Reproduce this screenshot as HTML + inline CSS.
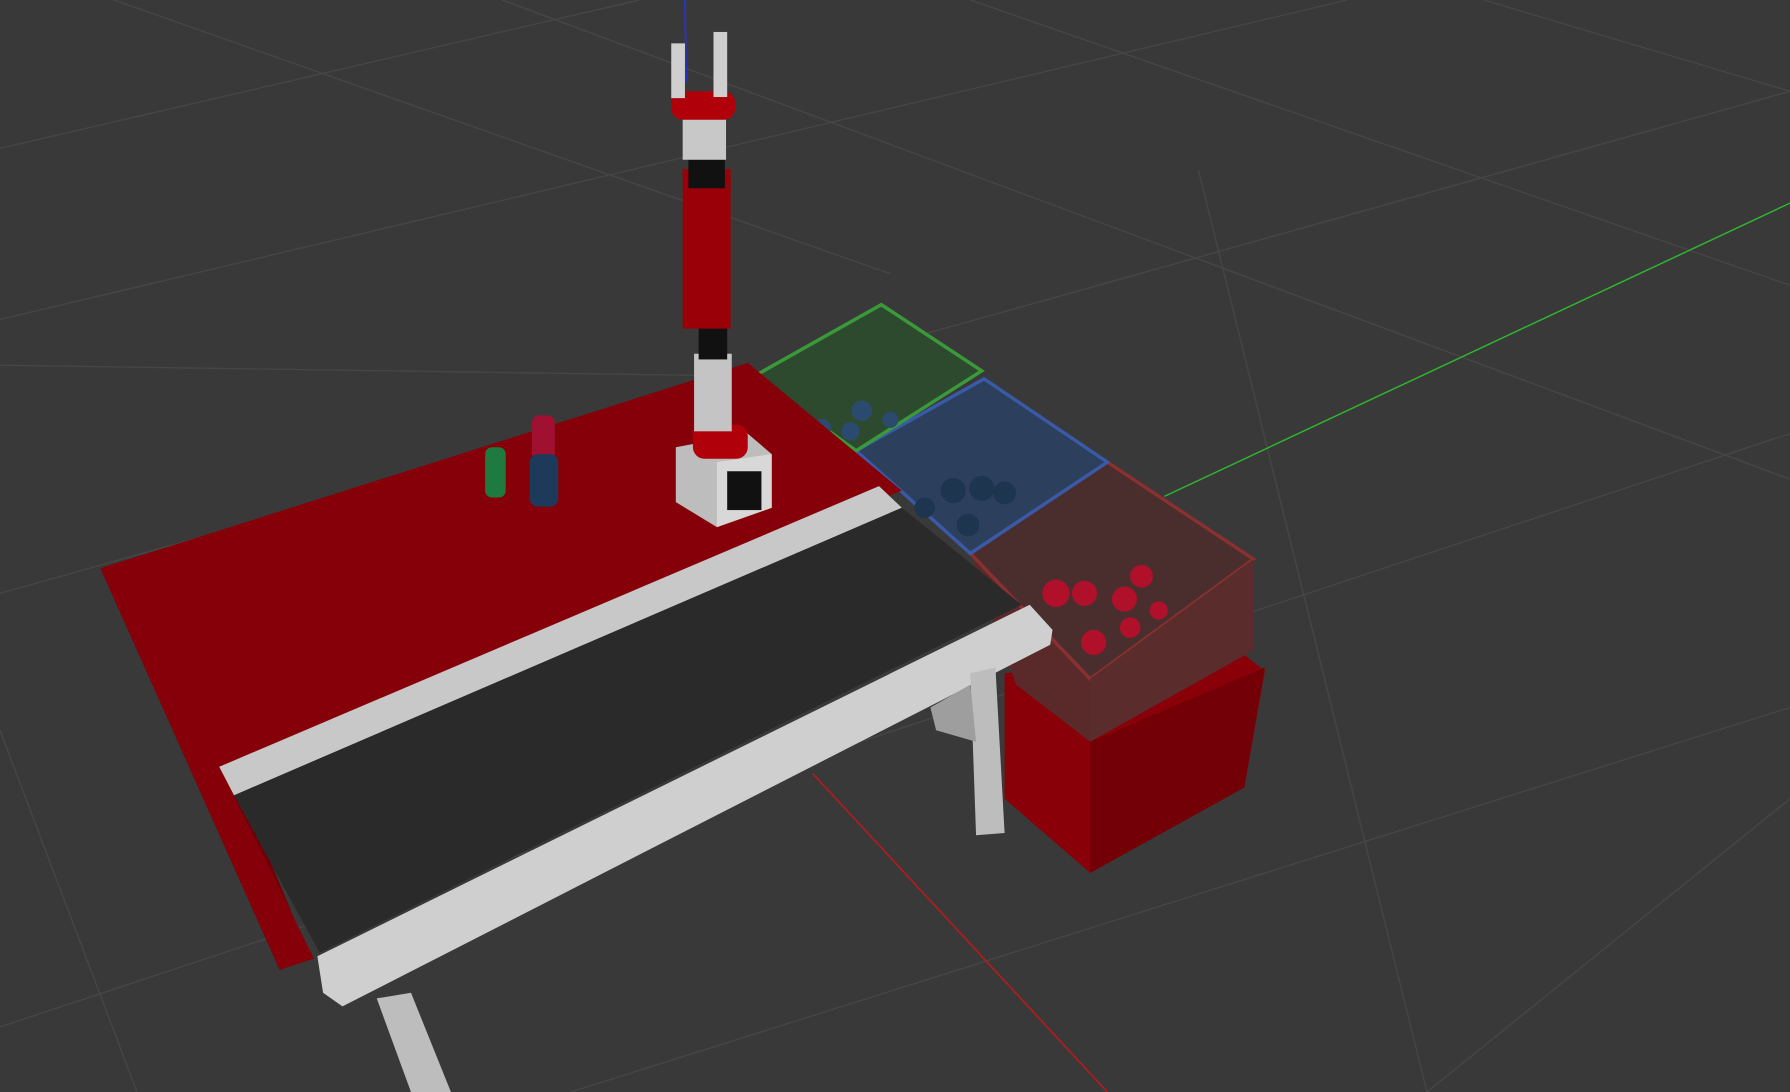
<!DOCTYPE html>
<html><head><meta charset="utf-8"><style>
html,body{margin:0;padding:0;background:#393939;width:1790px;height:1092px;overflow:hidden}
svg{display:block}
</style></head><body>
<svg width="1790" height="1092" viewBox="0 0 1568 957" preserveAspectRatio="none" xmlns="http://www.w3.org/2000/svg">
<rect width="1568" height="957" fill="#393939"/>
<g stroke="#464646" stroke-width="1.2" fill="none">
<line x1="0" y1="130" x2="560" y2="0"/>
<line x1="0" y1="280" x2="1180" y2="0"/>
<line x1="0" y1="520" x2="1568" y2="80"/>
<line x1="0" y1="900" x2="1568" y2="380"/>
<line x1="500" y1="957" x2="1568" y2="620"/>
<line x1="100" y1="0" x2="780" y2="240"/>
<line x1="440" y1="0" x2="1568" y2="420"/>
<line x1="850" y1="0" x2="1568" y2="250"/>
<line x1="1300" y1="0" x2="1568" y2="80"/>
<line x1="0" y1="640" x2="120" y2="957"/>
<line x1="1568" y1="700" x2="1250" y2="957"/>
<line x1="1050" y1="150" x2="1250" y2="957"/>
<line x1="0" y1="320" x2="680" y2="330"/>
</g>
<line x1="1020" y1="435" x2="1568" y2="178" stroke="#2fb52f" stroke-width="1.3"/>
<line x1="712" y1="678" x2="970" y2="957" stroke="#c01818" stroke-width="1.3"/>
<line x1="600" y1="0" x2="601" y2="72" stroke="#2233dd" stroke-width="1.5"/>
<polygon points="880,590 1085,570 1108,588 1090,690 955,765 880,700" fill="#8a0008"/>
<polygon points="955,650 1108,585 1090,690 955,765" fill="#720006"/>
<polygon points="850,485 970,405 1098,490 1098,570 955,650 890,600" fill="#5a2a2a"/>
<polygon points="850,485 970,405 1098,490 955,595" fill="#4a2e2e" stroke="#8a3030" stroke-width="3"/>
<polygon points="955,595 1098,490 1098,570 955,650" fill="#5a2c2c"/>
<polygon points="750,395 862,332 970,405 850,485" fill="#2c3f5c" stroke="#3a5aa8" stroke-width="3"/>
<polygon points="660,330 772,267 860,325 750,395" fill="#2e4a2e" stroke="#3a9a3a" stroke-width="3"/>
<g fill="#2a4a70"><circle cx="720" cy="375" r="8"/><circle cx="755" cy="360" r="9"/><circle cx="745" cy="378" r="8"/><circle cx="780" cy="368" r="7"/></g>
<g fill="#1e3550"><circle cx="835" cy="430" r="11"/><circle cx="860" cy="428" r="11"/><circle cx="880" cy="432" r="10"/><circle cx="848" cy="460" r="10"/><circle cx="810" cy="445" r="9"/></g>
<g fill="#b0102a"><circle cx="925" cy="520" r="12"/><circle cx="950" cy="520" r="11"/><circle cx="985" cy="525" r="11"/><circle cx="1000" cy="505" r="10"/><circle cx="958" cy="563" r="11"/><circle cx="990" cy="550" r="9"/><circle cx="1015" cy="535" r="8"/></g>
<polygon points="88,498 245,850 272,840 140,520" fill="#6e0006"/>
<polygon points="88,498 655,318 790,430 192,672 275,840 245,850" fill="#86000a"/>
<polygon points="192,672 770,426 790,445 205,697" fill="#c8c8c8"/>
<polygon points="205,697 790,445 895,530 280,835" fill="#2a2a2a"/>
<polygon points="278,838 902,530 922,552 920,565 300,882 283,870" fill="#cfcfcf"/>
<polygon points="850,590 872,585 880,730 855,732" fill="#bdbdbd"/>
<polygon points="815,620 850,600 855,650 820,640" fill="#9e9e9e"/>
<polygon points="330,875 360,870 395,957 360,957" fill="#bdbdbd"/>
<rect x="425" y="392" width="18" height="44" rx="6" fill="#1f7a40"/>
<rect x="466" y="364" width="20" height="40" rx="6" fill="#a01030"/>
<rect x="464" y="398" width="25" height="46" rx="7" fill="#1e3a5a"/>
<polygon points="592,392 655,380 676,398 676,445 628,462 592,440" fill="#bdbdbd"/>
<polygon points="628,405 676,398 676,445 628,462" fill="#d8d8d8"/>
<rect x="637" y="413" width="30" height="34" fill="#111"/>
<rect x="607" y="372" width="48" height="30" rx="10" fill="#b0000a"/>
<rect x="608" y="310" width="33" height="68" fill="#c4c4c4"/>
<rect x="612" y="283" width="25" height="32" fill="#111"/>
<rect x="598" y="148" width="42" height="140" fill="#9a0008"/>
<rect x="603" y="140" width="32" height="25" fill="#111"/>
<rect x="598" y="100" width="38" height="40" fill="#c8c8c8"/>
<rect x="588" y="80" width="56" height="25" rx="10" fill="#b0000a"/>
<rect x="588" y="38" width="12" height="48" fill="#cfcfcf"/>
<rect x="625" y="28" width="12" height="57" fill="#cfcfcf"/>
</svg>
</body></html>
